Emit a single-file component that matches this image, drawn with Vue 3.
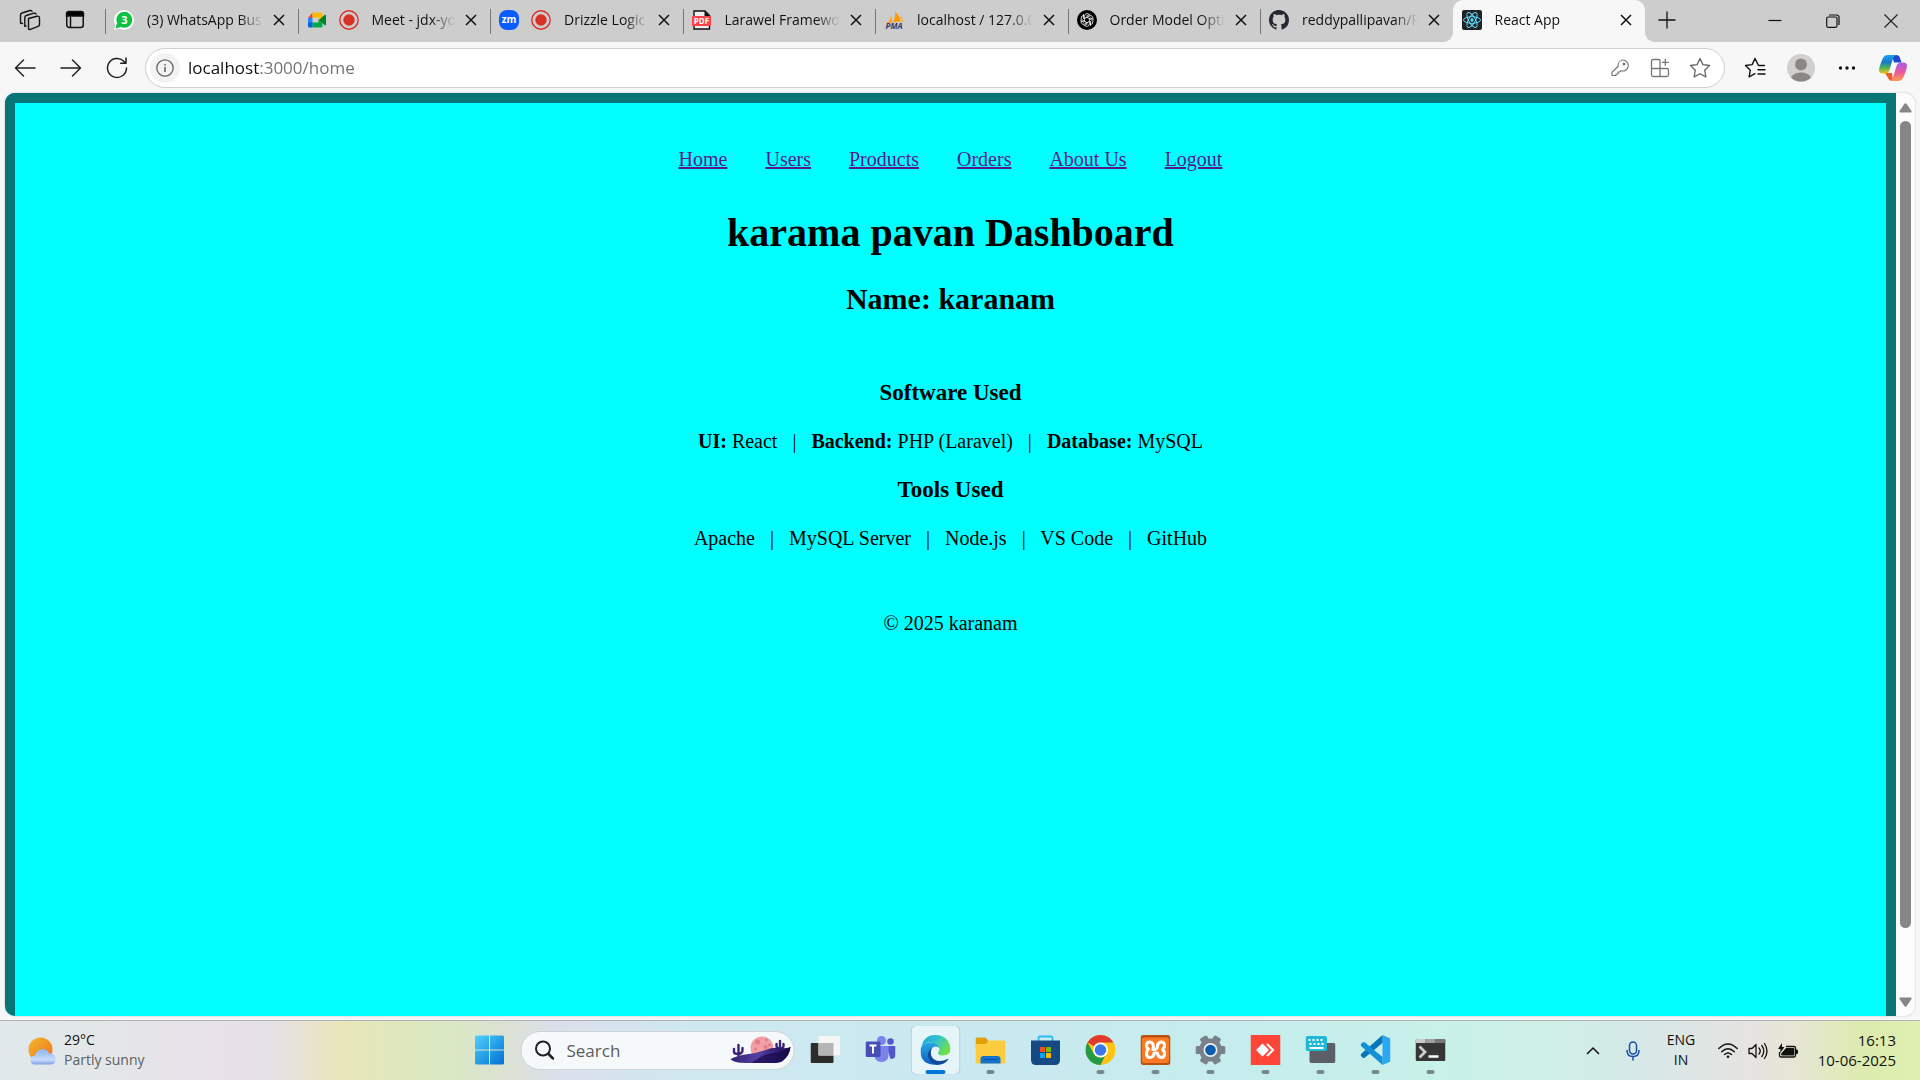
<script setup>
import { ref } from 'vue'

const tabs = [
  { icon: 'whatsapp', title: '(3) WhatsApp Busi' },
  { icon: 'meet', title: 'Meet - jdx-yo', recording: true },
  { icon: 'zoom', title: 'Drizzle Logic', recording: true },
  { icon: 'pdf', title: 'Larawel Framewor' },
  { icon: 'pma', title: 'localhost / 127.0.0' },
  { icon: 'openai', title: 'Order Model Opti' },
  { icon: 'github', title: 'reddypallipavan/P' },
  { icon: 'react', title: 'React App', active: true },
]

const links = ['Home', 'Users', 'Products', 'Orders', 'About Us', 'Logout']

const apps = [
  { id: 'taskview', label: 'Task view' },
  { id: 'teams', label: 'Teams' },
  { id: 'edge', label: 'Edge', current: true },
  { id: 'explorer', label: 'File Explorer', open: true },
  { id: 'store', label: 'Microsoft Store' },
  { id: 'chrome', label: 'Chrome', open: true },
  { id: 'xampp', label: 'XAMPP', open: true },
  { id: 'settings', label: 'Settings', open: true },
  { id: 'anydesk', label: 'AnyDesk', open: true },
  { id: 'keyboard', label: 'On-screen keyboard', open: true },
  { id: 'vscode', label: 'VS Code', open: true },
  { id: 'terminal', label: 'Terminal', open: true },
]

const url = ref('localhost:3000/home')
const query = ref('')
</script>

<template>
  <div class="desktop">
    <header class="tabstrip">
      <div class="strip-left">
        <button aria-label="Workspaces">
          <svg width="22" height="22" viewBox="0 0 22 22" fill="none" stroke="#111" stroke-width="1.4" stroke-linejoin="round" stroke-linecap="round">
            <path d="M9.5 9.500l8.500-2.300q2.500-.5 2.500 2v6.200q0 1.500-1.500 2l-7.500 3q-2 .6-2-1.400z" />
            <path d="M7 17l-1.200.3V8.500q0-1.600 1.500-2l7.700-2.300q1.600-.4 2 .9" />
            <path d="M3.500 14.500L1.500 14V6q0-1.600 1.500-2l8-2.500q1.600-.4 2 .9" />
          </svg>
        </button>
        <button aria-label="Tab actions">
          <svg width="20" height="20" viewBox="0 0 20 20" fill="none" stroke="#111" stroke-width="1.500">
            <rect x="1.750" y="2" width="16.500" height="15.500" rx="2.500" />
            <path d="M1.500 6V4q0-2.500 2.500-2.500h12q2.500 0 2.500 2.500v2z" fill="#000" />
            <path d="M5.500 7v10.500" />
          </svg>
        </button>
      </div>

      <nav class="tabs" aria-label="Open tabs">
        <div v-for="t in tabs" :key="t.icon" class="tab" :class="{ active: t.active }">
          <svg v-if="t.icon === 'whatsapp'" class="fav" viewBox="0 0 20 20">
            <circle cx="10" cy="10" r="10" fill="#fff" /><path d="M0 20l2-7 5 5z" fill="#fff" />
            <circle cx="10.300" cy="9.800" r="8" fill="#0ec143" /><path d="M1.500 18.500l1.500-5.500 4 4z" fill="#0ec143" />
            <text x="10.300" y="14" text-anchor="middle" font-size="11" font-weight="700" fill="#fff">3</text>
          </svg>
          <svg v-else-if="t.icon === 'meet'" class="fav" viewBox="0 0 20 20">
            <path d="M5.500 2.500V8H1z" fill="#ea4335" /><path d="M1 8h4.500v5H1z" fill="#2684fc" />
            <path d="M5.500 2.500H14q1.500 0 1.500 1.500v5l-4 1.500V7.500h-6z" fill="#ffba00" />
            <path d="M5.500 17.500v-5h6v-3l4 1v5.500q0 1.500-1.500 1.500z" fill="#00ac47" />
            <path d="M1 12.500h4.500v5h-3Q1 17.500 1 16z" fill="#0066da" />
            <path d="M12 10l5.500-5q1.500-.8 1.500 1v8q0 1.800-1.500 1z" fill="#00832d" />
          </svg>
          <svg v-else-if="t.icon === 'zoom'" class="fav" viewBox="0 0 20 20">
            <rect width="20" height="20" rx="8" fill="#0b5cff" />
            <text x="10" y="13" text-anchor="middle" font-size="10" font-weight="700" fill="#fff">zm</text>
          </svg>
          <svg v-else-if="t.icon === 'pdf'" class="fav" viewBox="0 0 20 20">
            <path d="M2 1h11l4.500 4.500V19H2z" fill="#eee" stroke="#111" stroke-width="1.400" /><path d="M12.500 1v5h5z" fill="#111" />
            <rect x="0" y="6" width="19" height="10" rx="1" fill="#ff4148" />
            <text x="9.500" y="14" text-anchor="middle" font-size="8" font-weight="700" fill="#fff">PDF</text>
          </svg>
          <svg v-else-if="t.icon === 'pma'" class="fav" viewBox="0 0 20 20">
            <path d="M2 13q4-2 5-8l1.500 8z" fill="#f8a13c" /><path d="M8.500 12.500Q12 7 11 1q5 5 5.500 10.500z" fill="#f89c0e" /><path d="M15 5q4 3 4.500 7l-3-.5z" fill="#f8b45c" />
            <text x="10" y="19" text-anchor="middle" font-size="8" font-weight="700" font-style="italic" fill="#35356b">PMA</text>
          </svg>
          <svg v-else-if="t.icon === 'openai'" class="fav" viewBox="0 0 20 20">
            <circle cx="10" cy="10" r="10" fill="#000" />
            <g fill="none" stroke="#fff" stroke-width=".8">
              <path v-for="n in 6" :key="n" :transform="`rotate(${n * 60} 10 10)`" d="M7.600 11.400V6.200q0-2.400 2.300-2.600 1.400 0 2.200.9M9.300 6.300l4-2.200" />
            </g>
          </svg>
          <svg v-else-if="t.icon === 'github'" class="fav" viewBox="0 0 16 16">
            <path fill="#24292f" d="M8 0C3.580 0 0 3.580 0 8c0 3.540 2.290 6.530 5.470 7.590.4.070.55-.17.55-.38 0-.19-.01-.82-.01-1.490-2.010.37-2.530-.49-2.690-.94-.09-.23-.48-.94-.82-1.130-.28-.15-.68-.52-.01-.53.63-.01 1.080.58 1.230.82.72 1.210 1.870.87 2.330.66.070-.52.280-.87.510-1.070-1.780-.2-3.640-.89-3.640-3.950 0-.87.310-1.590.82-2.150-.08-.2-.36-1.020.080-2.120 0 0 .67-.21 2.200.82.640-.18 1.320-.27 2-.27s1.360.090 2 .27c1.530-1.040 2.200-.82 2.200-.82.440 1.100.160 1.920.080 2.120.510.560.82 1.270.82 2.150 0 3.070-1.870 3.750-3.650 3.950.29.25.54.73.54 1.480 0 1.070-.01 1.930-.01 2.200 0 .21.150.46.55.38A8.010 8.010 0 0 0 16 8c0-4.420-3.580-8-8-8z" />
          </svg>
          <svg v-else class="fav" viewBox="0 0 20 20">
            <rect width="20" height="20" rx="2" fill="#222" />
            <g fill="none" stroke="#61dafb" stroke-width="1">
              <ellipse v-for="n in 3" :key="n" cx="10" cy="10" rx="8.500" ry="3.300" :transform="`rotate(${n * 60} 10 10)`" />
            </g>
            <circle cx="10" cy="10" r="1.700" fill="#61dafb" />
          </svg>
          <svg v-if="t.recording" class="fav rec" viewBox="0 0 20 20">
            <circle cx="10" cy="10" r="9.200" fill="none" stroke="#d93025" stroke-width="1.400" /><circle cx="10" cy="10" r="5.700" fill="#d93025" />
          </svg>
          <span class="tab-title">{{ t.title }}</span>
          <button class="close" aria-label="Close tab">
            <svg width="12" height="12" viewBox="0 0 12 12" stroke="#111" stroke-width="1.500"><path d="M1 1l10 10M11 1L1 11" /></svg>
          </button>
        </div>
      </nav>

      <button class="new-tab" aria-label="New tab">
        <svg width="18" height="18" viewBox="0 0 18 18" stroke="#111" stroke-width="1.300"><path d="M9 .5v17M.5 9h17" /></svg>
      </button>
      <div class="window-buttons">
        <button aria-label="Minimize"><svg width="14" height="14" viewBox="0 0 14 14" stroke="#111" stroke-width="1.200"><path d="M.5 6.500h13" /></svg></button>
        <button aria-label="Restore"><svg width="14" height="14" viewBox="0 0 14 14" stroke="#111" stroke-width="1.200" fill="none"><rect x=".7" y="3" width="10.300" height="10.300" rx="1.500" /><path d="M3 1h7.500q2.500 0 2.500 2.500V11" /></svg></button>
        <button aria-label="Close"><svg width="14" height="14" viewBox="0 0 14 14" stroke="#222" stroke-width="1.200"><path d="M.5.5l13 13M13.500.5l-13 13" /></svg></button>
      </div>
    </header>

    <div class="toolbar">
      <button class="tool" aria-label="Back"><svg width="22" height="20" viewBox="0 0 22 20" fill="none" stroke="#222" stroke-width="1.500" stroke-linecap="round" stroke-linejoin="round"><path d="M21 10H1.500M9.500 2l-8 8 8 8" /></svg></button>
      <button class="tool" aria-label="Forward"><svg width="22" height="20" viewBox="0 0 22 20" fill="none" stroke="#222" stroke-width="1.500" stroke-linecap="round" stroke-linejoin="round"><path d="M1 10h19.500M12.500 2l8 8-8 8" /></svg></button>
      <button class="tool" aria-label="Refresh"><svg width="22" height="22" viewBox="0 0 22 22" fill="none" stroke="#222" stroke-width="1.500" stroke-linecap="round" stroke-linejoin="round"><path d="M20.500 11a9.500 9.500 0 1 1-3-7l2 2M20 1v5.300h-5.300" /></svg></button>
      <div class="address">
        <button class="info" aria-label="Site information"><svg width="18" height="18" viewBox="0 0 18 18" fill="none" stroke="#666" stroke-width="1.300"><circle cx="9" cy="9" r="8.200" /><path d="M9 8v5M9 5v1.600" stroke-width="1.600" /></svg></button>
        <input v-model="url" class="url" type="text" aria-label="Address" spellcheck="false" />
        <button class="pill-tool" aria-label="Saved passwords"><svg width="18" height="18" viewBox="0 0 18 18" fill="none" stroke="#777" stroke-width="1.200" stroke-linejoin="round"><path d="M11.500 1a5.500 5.500 0 1 1-1.500 10.700L8.700 13H7v2H5v1.500H1v-3.300l6.200-6A5.500 5.500 0 0 1 11.500 1z" /><circle cx="13" cy="5" r=".9" fill="#777" /></svg></button>
        <button class="pill-tool" aria-label="App available"><svg width="20" height="20" viewBox="0 0 20 20" fill="none" stroke="#777" stroke-width="1.300" stroke-linejoin="round"><path d="M10 2.500q0-1-1.500-1H3q-1.500 0-1.500 1.500v14q0 1.500 1.500 1.500h14q1.500 0 1.500-1.500v-5q0-1.500-1.500-1.500H1.500M10 2.500v16M15.300.8v7M11.800 4.300h7" /></svg></button>
        <button class="pill-tool" aria-label="Add to favorites"><svg width="22" height="22" viewBox="0 0 22 22" fill="none" stroke="#666" stroke-width="1.300" stroke-linejoin="round"><path d="M11 1.500l2.900 6.100 6.600.9-4.800 4.700 1.200 6.700L11 16.700l-5.900 3.200 1.200-6.700L1.500 8.500l6.600-.9z" /></svg></button>
      </div>
      <button class="tool" aria-label="Favorites"><svg width="22" height="22" viewBox="0 0 22 22" fill="none" stroke="#111" stroke-width="1.400" stroke-linejoin="round" stroke-linecap="round"><path d="M20.500 8.500h-6L11 1.500 8.100 7.600l-6.600.9 4.800 4.700-1.200 6.700 5.900-3.200M14 12.800h7M14 17h7" /></svg></button>
      <button class="tool" aria-label="Profile"><svg width="28" height="28" viewBox="0 0 28 28"><circle cx="14" cy="14" r="14" fill="#d2d0ce" /><circle cx="14" cy="10.500" r="6" fill="#8a8886" /><path d="M4 23.500q3-5 10-5t10 5q-4 4-10 4t-10-4z" fill="#8a8886" /></svg></button>
      <button class="tool" aria-label="More"><svg width="18" height="6" viewBox="0 0 18 6" fill="#111"><circle cx="2.500" cy="3" r="1.700" /><circle cx="9" cy="3" r="1.700" /><circle cx="15.500" cy="3" r="1.700" /></svg></button>
      <button class="tool copilot" aria-label="Copilot">
        <svg width="28" height="26" viewBox="0 0 28 26">
          <defs>
            <linearGradient id="cpA" x1="0" y1="0" x2="0" y2="1"><stop offset="0" stop-color="#18a4f0" /><stop offset=".4" stop-color="#1978c8" /><stop offset=".7" stop-color="#4fb84e" /><stop offset="1" stop-color="#f5c518" /></linearGradient>
            <linearGradient id="cpB" x1="0" y1="0" x2="0" y2="1"><stop offset="0" stop-color="#a45cf0" /><stop offset=".5" stop-color="#e8589c" /><stop offset="1" stop-color="#ff9a50" /></linearGradient>
          </defs>
          <path d="M13 0h4q3 0 4 3l1.500 4.500H15z" fill="#1b48d0" />
          <path d="M6 18h7l1 8q-3 0-4-1.500-2.500-4-4-6.500z" fill="#f25a2a" />
          <path d="M9 0h8q-2.500 1-3.300 4.500L10.500 15q-1.200 3.500-4.500 3.500H3.500Q0 18.500 0 15q0-2.500 3.500-11Q5 0 9 0z" fill="url(#cpA)" />
          <path d="M19 26h-8q2.500-1 3.300-4.500L17.500 11Q18.700 7.500 22 7.500h2.500q3.500 0 3.500 3.500 0 2.500-3.500 11Q23 26 19 26z" fill="url(#cpB)" />
        </svg>
      </button>
    </div>

    <div class="viewport">
      <main class="page">
        <nav class="site-nav" aria-label="Site">
          <a v-for="l in links" :key="l" href="#">{{ l }}</a>
        </nav>
        <h1>karama pavan Dashboard</h1>
        <h2>Name: karanam</h2>
        <section>
          <h3>Software Used</h3>
          <p><b>UI:</b> React &nbsp;&nbsp;|&nbsp;&nbsp; <b>Backend:</b> PHP (Laravel) &nbsp;&nbsp;|&nbsp;&nbsp; <b>Database:</b> MySQL</p>
          <h3>Tools Used</h3>
          <p>Apache &nbsp;&nbsp;|&nbsp;&nbsp; MySQL Server &nbsp;&nbsp;|&nbsp;&nbsp; Node.js &nbsp;&nbsp;|&nbsp;&nbsp; VS Code &nbsp;&nbsp;|&nbsp;&nbsp; GitHub</p>
        </section>
        <footer>© 2025 karanam</footer>
      </main>
      <div class="scrollbar" aria-hidden="true">
        <svg width="13" height="10" viewBox="0 0 13 10" fill="#868686"><path d="M5.500.8q1-1.200 2 0l5 7.200q.6 1.500-1 1.500H1.500q-1.600 0-1-1.500z" /></svg>
        <div class="track"><div class="thumb"></div></div>
        <svg width="13" height="10" viewBox="0 0 13 10" fill="#868686"><path d="M5.500 9.200q1 1.200 2 0l5-7.200q.6-1.500-1-1.500H1.500Q-.1.5.5 2z" /></svg>
      </div>
    </div>

    <footer class="taskbar">
      <button class="weather">
        <svg width="28" height="28" viewBox="0 0 28 28">
          <defs>
            <linearGradient id="sun" x1="0" y1="0" x2="1" y2="1"><stop offset="0" stop-color="#f2b92c" /><stop offset="1" stop-color="#f1701a" /></linearGradient>
            <linearGradient id="cloud" x1="0" y1="0" x2="0" y2="1"><stop offset="0" stop-color="#8db4f0" /><stop offset=".7" stop-color="#c9dcfa" /><stop offset="1" stop-color="#7ba0e8" /></linearGradient>
          </defs>
          <circle cx="12.500" cy="12.500" r="12" fill="url(#sun)" />
          <path d="M7 27.500q-4.500 0-4.500-4.500 0-4 4.500-4.500Q9 12 14.500 12q5 0 6.500 4.500 6.500 0 6.500 5.800 0 5.200-5 5.200z" fill="url(#cloud)" />
        </svg>
        <span class="weather-text"><span>29°C</span><span class="muted">Partly sunny</span></span>
      </button>

      <div class="dock">
        <button class="start" aria-label="Start">
          <svg width="30" height="30" viewBox="0 0 30 30">
            <defs><linearGradient id="win" x1="0" y1="0" x2="1" y2="1"><stop offset="0" stop-color="#50d0fc" /><stop offset="1" stop-color="#0070d4" /></linearGradient></defs>
            <path d="M2 .5h12.500v14H.5V2Q.5.5 2 .5zM15.500.5H28q1.500 0 1.500 1.500v12.500h-14zM.5 15.500h14v14H2q-1.500 0-1.500-1.500zM15.500 15.500h14V28q0 1.500-1.500 1.500H15.500z" fill="url(#win)" />
          </svg>
        </button>
        <label class="search">
          <svg width="20" height="20" viewBox="0 0 20 20" fill="none" stroke="#222" stroke-width="2" stroke-linecap="round"><circle cx="8.500" cy="8.500" r="7" /><path d="M14 14l4.500 4.500" stroke-width="2.500" /></svg>
          <input v-model="query" type="text" placeholder="Search" aria-label="Search" />
          <svg width="62" height="30" viewBox="0 0 62 30">
            <defs><linearGradient id="dune" x1="0" y1="0" x2="1" y2="0"><stop offset="0" stop-color="#34206f" /><stop offset=".45" stop-color="#5541a5" /><stop offset="1" stop-color="#190a4d" /></linearGradient></defs>
            <circle cx="32.500" cy="13" r="11.500" fill="#f2a0a6" /><g fill="#df7d89"><circle cx="28" cy="7" r="2.500" /><circle cx="37" cy="5" r="1.500" /><circle cx="36" cy="12" r="2" /><circle cx="26" cy="14" r="1.500" /><circle cx="40" cy="10" r="1.500" /></g>
            <path d="M9 10v14M4.500 14v3q0 2 4.500 2 4 0 4-4v-2M50.500 6v12M47 9v2q0 2.500 3.500 2.500T54 11V9" fill="none" stroke="#392477" stroke-width="2.400" stroke-linecap="round" />
            <path d="M1 24q8-4 18-5 9-1 17-4 7-3 14-2 6 1 11-1-1 9-8 14-3 2-11 2H16Q4 28 1 24z" fill="url(#dune)" />
            <path d="M22 28q10-9 22-10 10-1 17-6-1 9-8 14-3 2-11 2z" fill="#180a4c" opacity=".7" />
          </svg>
        </label>

        <button v-for="a in apps" :key="a.id" class="app" :class="{ current: a.current, open: a.open }" :aria-label="a.label">
          <svg v-if="a.id === 'taskview'" viewBox="0 0 30 30"><rect x="0" y="8" width="23" height="20" rx="1" fill="#2c2c2b" /><rect x="8" y="1" width="21.500" height="19.500" rx="1" fill="#f5f5f5" /><path d="M8 8h15v12.500H8z" fill="#b5b5b5" /></svg>
          <svg v-else-if="a.id === 'teams'" viewBox="0 0 30 30"><circle cx="25" cy="6.500" r="3.300" fill="#5059c9" /><path d="M21 11h9v9q0 4-5 4z" fill="#5059c9" /><circle cx="16" cy="5.500" r="4.500" fill="#7b83eb" /><path d="M9 11h14v9q0 7-7 7t-7-7z" fill="#7b83eb" /><rect x="0" y="6.500" width="15" height="15.500" rx="1.500" fill="#464eb8" /><path d="M4 10.500h7M7.500 10.500v8" stroke="#fff" stroke-width="2" /></svg>
          <svg v-else-if="a.id === 'edge'" viewBox="0 0 30 30">
            <defs>
              <linearGradient id="eg" x1="0" y1="0" x2="1" y2=".5"><stop offset="0" stop-color="#1fa0dc" /><stop offset=".5" stop-color="#2fc3cf" /><stop offset="1" stop-color="#6fe04c" /></linearGradient>
              <linearGradient id="eb" x1="0" y1="0" x2="0" y2="1"><stop offset="0" stop-color="#2aa7e4" /><stop offset="1" stop-color="#0a5fbe" /></linearGradient>
            </defs>
            <path d="M.8 12.500Q3 0 15 0q8 0 12 5.500 3 4 3 8 0 7-8 7-4.500 0-4.500-2.500 0-1 1.500-3 0-5-6-7-8-2-12.200 4.500z" fill="url(#eg)" />
            <path d="M.2 13.500Q3 7.500 9.500 7.500q8 0 9.500 6-1-2-4-2-4.500.5-5 6-.5 8 8 12Q0 31 0 16q0-1.500.2-2.500z" fill="url(#eb)" />
            <path d="M11.500 13q-2 3-1 7 2 6 9 6 4 0 7.500-2 1-.5.8.6Q24 30 17 30 9 28 7.500 21q-.5-5 4-8z" fill="#12489a" />
          </svg>
          <svg v-else-if="a.id === 'explorer'" viewBox="0 0 30 30"><path d="M0 4q0-1.500 1.500-1.500H10L13 6v5H0z" fill="#e0a106" /><path d="M0 10q0-1 1-1h9l3-3.500h15.500Q30 5.500 30 7v20q0 1.500-1.500 1.500h-27Q0 28.500 0 27z" fill="#fccb3e" /><path d="M5 28.500V24q0-3 3-3h14q3 0 3 3v4.500z" fill="#1173cd" /><path d="M8 24.500h14" stroke="#0b4f9c" /></svg>
          <svg v-else-if="a.id === 'store'" viewBox="0 0 30 30"><path d="M8 7V3q0-1.500 1.500-1.500h11Q22 1.500 22 3v4" fill="none" stroke="#2bbcf0" stroke-width="1.800" /><path d="M.5 5.500h29V25q0 5-5 5h-19q-5 0-5-5z" fill="#154a85" /><path d="M9.500 12h5v5h-5z" fill="#f25022" /><path d="M15.500 12h5v5h-5z" fill="#7fba00" /><path d="M9.500 18h5v5h-5z" fill="#00a4ef" /><path d="M15.500 18h5v5h-5z" fill="#ffb900" /></svg>
          <svg v-else-if="a.id === 'chrome'" viewBox="0 0 30 30"><circle cx="15" cy="15" r="15" fill="#ffc313" /><path d="M15 0a15 15 0 0 1 13 7.500H15a7.500 7.500 0 0 0-6.500 3.700L2 7.500A15 15 0 0 1 15 0z" fill="#e23b2e" /><path d="M2 7.500l6.500 11.200a7.500 7.500 0 0 0 6.500 3.800q3 0 4.500-1.500L15 30A15 15 0 0 1 2 7.500z" fill="#249a46" /><circle cx="15" cy="15" r="7.500" fill="#fff" /><circle cx="15" cy="15" r="5.800" fill="#3b78e7" /></svg>
          <svg v-else-if="a.id === 'xampp'" viewBox="0 0 30 30"><rect width="30" height="30" rx="3" fill="#b95213" /><rect x="1.500" y="2.500" width="27" height="25.500" rx="2" fill="#fb7a24" /><path d="M12.500 14.500q1.500-7-3-7.500-3.500 0-3.500 3.500 0 2.500 2 3.500-2 2-2 5 0 3.500 3.500 3.500 4-.5 4-4.500h3.500q0 4 3.500 4.500 3.500 0 3.500-4 0-2.500-2-4 2-1.500 2-4Q24 7 20.500 7q-3.500.5-3.500 4.500 0 2-2.500 3H11" fill="none" stroke="#fff" stroke-width="3" stroke-linejoin="round" /></svg>
          <svg v-else-if="a.id === 'settings'" viewBox="0 0 30 30"><g fill="#79818a"><rect v-for="n in 3" :key="n" x="11" y="0" width="8" height="30" rx="1.500" :transform="`rotate(${n * 60 + 30} 15 15)`" /><circle cx="15" cy="15" r="11.500" /></g><circle cx="15" cy="15" r="7" fill="#eef1f4" /><circle cx="15" cy="15" r="5.300" fill="#0b5cad" /></svg>
          <svg v-else-if="a.id === 'anydesk'" viewBox="0 0 30 30"><path d="M0 0h30v30H0z" fill="#ff4438" /><path d="M12 8.500l6.500 6.500-6.500 6.500L5.500 15z" fill="#fff" /><path d="M16.500 9l6 6-6 6" fill="none" stroke="#fff" stroke-width="2.200" /></svg>
          <svg v-else-if="a.id === 'keyboard'" viewBox="0 0 30 30"><path d="M4 8h24q2 0 2 2v16q0 2-2 2H6q-2 0-2-2z" fill="#5b6067" /><rect x="0" y="1" width="21.500" height="15" rx="2" fill="#1fb9d6" /><path d="M3 5h16M4 9h14" stroke="#fff" stroke-width="2" stroke-dasharray="2 2" /><path d="M4 13h14" stroke="#fff" stroke-width="1.800" /></svg>
          <svg v-else-if="a.id === 'vscode'" viewBox="0 0 30 30"><path d="M22 0l8 3.500v23L22 30z" fill="#2aa7f3" /><path d="M22 0v8L4.500 22.500Q3 23.500 2 22.500l-1.500-1.500q-1-1 0-2z" fill="#0877b9" /><path d="M22 30v-8L4.500 7.500Q3 6.500 2 7.500L.5 9q-1 1 0 2z" fill="#1490d8" /></svg>
          <svg v-else viewBox="0 0 30 30"><rect x="0" y="4" width="30" height="22" rx="1.500" fill="#363636" /><path d="M1.500 4H10v4H0V5.500Q0 4 1.500 4z" fill="#ccc" /><path d="M10 4h10v4H10z" fill="#a0a0a0" /><path d="M20 4h8.500Q30 4 30 5.500V8H20z" fill="#777" /><path d="M4 11.500l5.500 5.500L4 22.500" fill="none" stroke="#ccc" stroke-width="2.800" /><path d="M13 21.500h10" stroke="#fff" stroke-width="2.500" /></svg>
        </button>
      </div>

      <div class="tray">
        <button class="tray-icon" aria-label="Show hidden icons"><svg width="14" height="10" viewBox="0 0 14 10" fill="none" stroke="#111" stroke-width="1.500"><path d="M1 8l6-6 6 6" /></svg></button>
        <button class="tray-icon" aria-label="Microphone"><svg width="14" height="20" viewBox="0 0 14 20" fill="none" stroke="#174ea6" stroke-width="1.500" stroke-linecap="round"><rect x="3.500" y="1" width="7" height="12" rx="3.500" /><path d="M1 9.500q0 6 6 6t6-6M7 15.500V19" /></svg></button>
        <button class="lang"><span>ENG</span><span>IN</span></button>
        <button class="status" aria-label="Network, volume and battery">
          <svg width="20" height="16" viewBox="0 0 20 16" fill="none" stroke="#111" stroke-width="1.400" stroke-linecap="round"><path d="M.8 5.500q9.200-9 18.400 0M3.700 8.700q6.300-6 12.600 0M6.600 11.500q3.400-3 6.800 0" /><circle cx="10" cy="13.800" r="1.300" fill="#111" stroke="none" /></svg>
          <svg width="20" height="18" viewBox="0 0 20 18" fill="none" stroke="#111" stroke-width="1.300" stroke-linecap="round" stroke-linejoin="round"><path d="M1 6.500h3l4-4v13l-4-4H1zM11 6q2.500 3 0 6M13.800 3.500q4 5.500 0 11M16.500 1.500q5 7.500 0 15" /></svg>
          <svg width="20" height="16" viewBox="0 0 20 16"><path d="M8 3.500h8q1.500 0 1.500 1.500v7.500q0 1.500-1.500 1.500H3q-1.500 0-1.500-1.500V9" fill="none" stroke="#111" stroke-width="1.300" /><path d="M8 5h7.500q.8 0 .8.800v6q0 .8-.8.800H4q-.8 0-.8-.8V10.500z" fill="#111" /><path d="M18 6.500h.8q1.200 0 1.200 1.200v2q0 1.300-1.200 1.300H18z" fill="#111" /><path d="M4 0L0 6h2.500L2 10l4.500-6H4z" fill="#111" /></svg>
        </button>
        <button class="clock"><span>16:13</span><span>10-06-2025</span></button>
      </div>
    </footer>
  </div>
</template>

<style>
body {
  margin: 0;
  background: #f7f7f7;
}
</style>

<style scoped>
.desktop {
  min-height: 100vh;
  display: flex;
  flex-direction: column;
  background: #f7f7f7;
  font-family: "Open Sans", "Noto Sans", sans-serif;
  font-size: 14px;
  color: #111;
}
svg { display: block; flex: none; }
button {
  display: flex;
  align-items: center;
  justify-content: center;
  padding: 0;
  border: 0;
  background: none;
  font: inherit;
  color: inherit;
}
input {
  min-width: 0;
  padding: 0;
  border: 0;
  outline: 0;
  background: none;
  font: inherit;
  color: inherit;
}

/* Tab strip */
.tabstrip {
  display: flex;
  height: 42px;
  background: #cdcdcd;
}
.strip-left {
  display: flex;
  align-items: center;
  gap: 24px;
  width: 86px;
  padding: 0 0 2px 19px;
}
.tabs {
  flex: 1;
  min-width: 0;
  display: flex;
}
.tab {
  position: relative;
  flex: 1 1 0;
  min-width: 0;
  display: flex;
  align-items: center;
  box-sizing: border-box;
  height: 42px;
  padding: 0 13px 2px 9px;
}
.tab:not(.active)::before {
  content: "";
  position: absolute;
  left: 0;
  top: 9px;
  width: 1px;
  height: 25px;
  background: #777;
}
.tab.active {
  background: #f7f7f7;
  border-radius: 10px 10px 0 0;
}
.tab.active::before,
.tab.active::after {
  content: "";
  position: absolute;
  bottom: 0;
  width: 10px;
  height: 10px;
}
.tab.active::before {
  left: -10px;
  background: radial-gradient(circle at 0 0, #cdcdcd 10px, #f7f7f7 10px);
}
.tab.active::after {
  right: -10px;
  background: radial-gradient(circle at 100% 0, #cdcdcd 10px, #f7f7f7 10px);
}
.fav {
  width: 20px;
  height: 20px;
}
.rec { margin-left: 12px; }
.tab-title {
  flex: 1;
  min-width: 0;
  margin: 0 10px 0 13px;
  overflow: hidden;
  white-space: nowrap;
  line-height: 20px;
  mask-image: linear-gradient(to left, transparent, #000 24px);
}
.close { width: 12px; height: 20px; }
.new-tab { width: 44px; height: 40px; }
.window-buttons {
  display: flex;
  width: 231px;
  padding-left: 57px;
  box-sizing: border-box;
}
.window-buttons button { flex: 1; }

/* Toolbar */
.toolbar {
  display: flex;
  align-items: center;
  height: 51px;
  padding: 0 4px 0 2px;
}
.tool { width: 46px; height: 40px; }
.address {
  flex: 1;
  min-width: 0;
  display: flex;
  align-items: center;
  box-sizing: border-box;
  height: 40px;
  margin: 0 7px 0 5px;
  padding: 0 4px;
  border: 1px solid #cfcfcf;
  border-radius: 20px;
  background: #fff;
}
.info {
  width: 30px;
  height: 30px;
  border-radius: 15px;
  background: #f3f3f3;
}
.url {
  flex: 1;
  margin-left: 8px;
  height: 30px;
  font-size: 17px;
  background: linear-gradient(to right, #111 71px, #707070 71px);
  background-clip: text;
  -webkit-text-fill-color: transparent;
}
.pill-tool { width: 40px; height: 30px; }

/* Browser page */
.viewport {
  flex: 1;
  display: flex;
  margin: 0 5px 4px;
  overflow: hidden;
  border-radius: 10px;
  background: #fcfcfc;
  box-shadow: 0 0 2px #bbb;
}
.page {
  flex: 1;
  display: flex;
  flex-direction: column;
  align-items: center;
  padding: 45px 20px 40px;
  border: 10px solid #077575;
  border-bottom: 0;
  background: #0ff;
  font-family: "Liberation Serif", "Times New Roman", serif;
  font-size: 20px;
  line-height: 23px;
  color: #000;
}
.site-nav {
  display: flex;
  gap: 38px;
}
.site-nav a { color: #551a8b; }
h1, h2, h3, p { margin: 0; text-align: center; }
h1 { margin-top: 39px; font-size: 40px; line-height: 46px; }
h2 { margin-top: 26px; font-size: 30px; line-height: 34px; }
section { margin: 40px 0 62px; }
h3 { margin-top: 24px; font-size: 23px; line-height: 26px; }
p { margin-top: 24px; }

.scrollbar {
  display: flex;
  flex-direction: column;
  align-items: center;
  width: 19px;
  padding: 10px 0 9px;
}
.track {
  flex: 1;
  width: 11px;
  margin: 8px 0;
}
.thumb {
  height: 93%;
  border-radius: 6px;
  background: #868686;
}

/* Taskbar */
.taskbar {
  position: relative;
  display: flex;
  align-items: center;
  justify-content: space-between;
  height: 59px;
  border-top: 1px solid #aeb4b5;
  background: linear-gradient(to right, #dfe8ea 0%, #e3e7e8 5%, #e8e1ea 11%, #e6e0e8 14%, #e9e5c2 17%, #e8e6b8 18%, #d9e9c2 23%, #dbe2d0 26%, #dbdfec 29%, #cfe8f0 36%, #c9e9f0 52%, #c5eeec 68%, #c8f1e9 75%, #cfefe6 81%, #d5e9e8 85%, #e6e3e2 91%, #e5e7d0 94%, #dcebae 97%, #e0f0b0 100%);
}
.weather {
  gap: 8px;
  padding-left: 28px;
}
.weather-text, .clock, .lang {
  display: flex;
  flex-direction: column;
  padding-bottom: 2px;
  line-height: 20px;
}
.weather-text { align-items: flex-start; }
.muted { color: #5c5f61; }
.dock {
  position: absolute;
  left: 50%;
  top: 5px;
  transform: translateX(-50%);
  display: flex;
  align-items: center;
  gap: 7px;
}
.start { width: 48px; height: 48px; }
.search {
  display: flex;
  align-items: center;
  box-sizing: border-box;
  width: 274px;
  height: 39px;
  padding: 0 2px 0 13px;
  border: 1px solid #ccd4d6;
  border-radius: 20px;
  background: #f5f9fa;
}
.search input {
  flex: 1;
  margin-left: 12px;
  font-size: 17px;
}
.search input::placeholder { color: #5a5d5f; opacity: 1; }
.app {
  position: relative;
  width: 48px;
  height: 48px;
  border-radius: 5px;
}
.app svg { width: 30px; height: 30px; }
.app.current { background: #e6f5f9; box-shadow: 0 0 1px #aac; }
.app.open::after, .app.current::after {
  content: "";
  position: absolute;
  left: 20px;
  bottom: 0;
  width: 8px;
  height: 4px;
  border-radius: 2px;
  background: #76898c;
}
.app.current::after {
  left: 14px;
  width: 20px;
  background: #0078d7;
}
.tray {
  display: flex;
  align-items: center;
  padding-right: 24px;
}
.tray-icon { width: 40px; height: 40px; }
.lang { width: 56px; }
.status { gap: 10px; padding: 0 12px 0 9px; }
.clock { align-items: flex-end; min-width: 86px; font-size: 15px; }
</style>
